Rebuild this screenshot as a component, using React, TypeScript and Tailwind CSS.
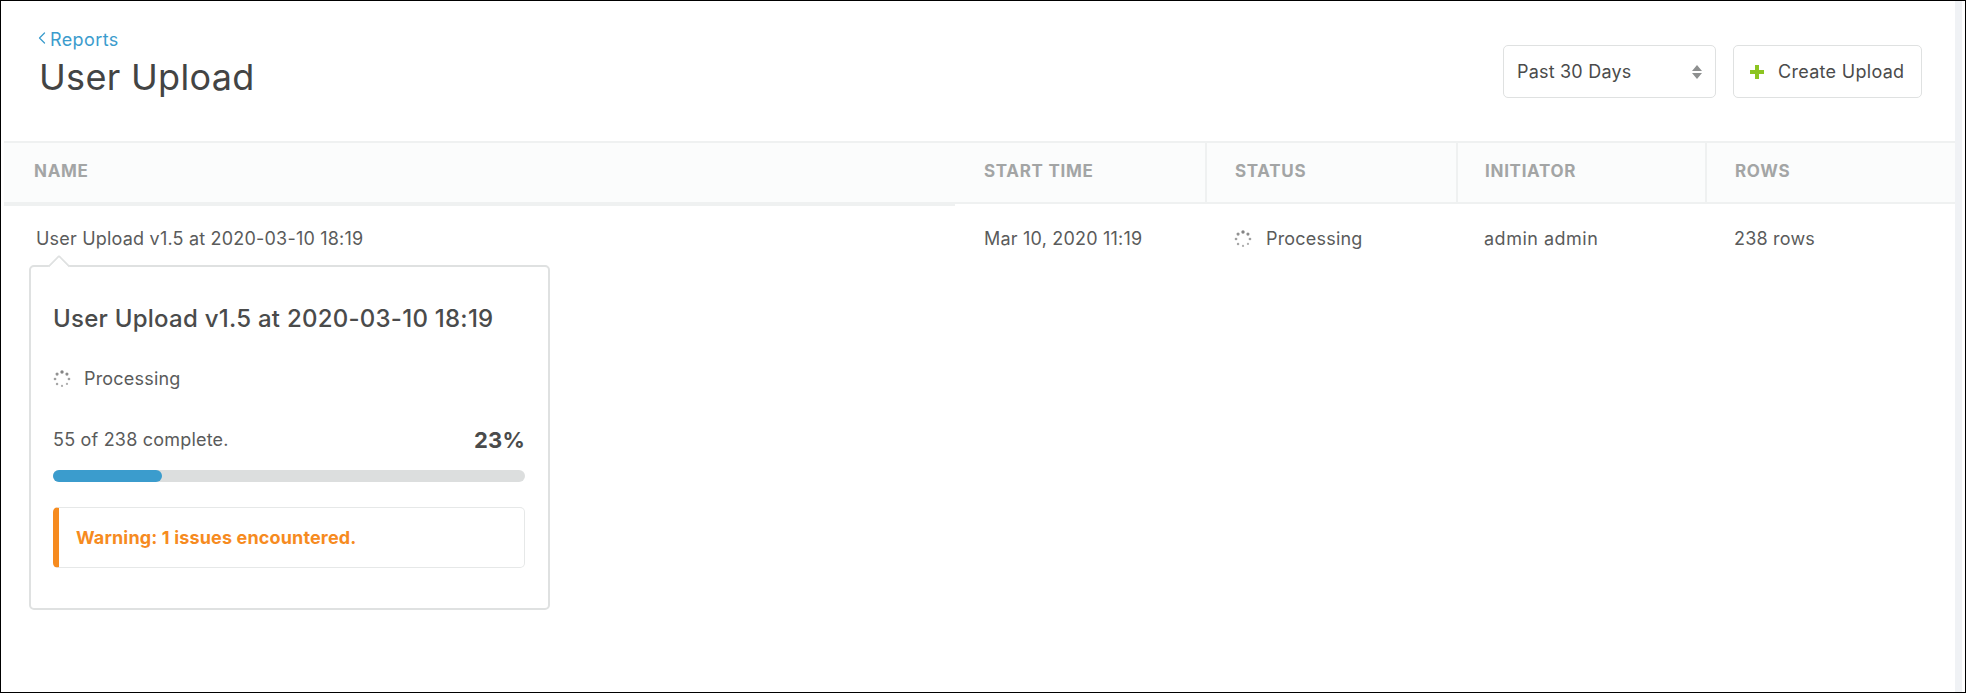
import { ChevronLeft } from "lucide-react";

const font = { fontFamily: "Inter, 'Noto Sans', sans-serif" };

// dotted spinner, each dot a bit fainter going round
function Spinner() {
  const dots = [
    [8, 1.8, 1.5, 0.9],
    [12.4, 3.6, 1.4, 0.85],
    [14.2, 8, 1.2, 0.7],
    [12.4, 12.4, 1, 0.6],
    [8, 14.2, 1, 0.6],
    [3.6, 12.4, 1.1, 0.65],
    [1.8, 8, 1.2, 0.7],
    [3.6, 3.6, 1.4, 0.8],
  ];
  return (
    <svg viewBox="0 0 16 16" className="h-[18px] w-[18px] shrink-0">
      {dots.map(([cx, cy, r, o], i) => (
        <circle key={i} cx={cx} cy={cy} r={r} fill="#777" opacity={o} />
      ))}
    </svg>
  );
}

function HeaderCell({ label, className }: { label: string; className: string }) {
  return (
    <div className={`flex items-center pb-[2px] text-[17px] font-bold tracking-[0.7px] text-[#a3a5a5] ${className}`}>
      {label}
    </div>
  );
}

export default function App() {
  return (
    <div className="relative h-[693px] w-[1966px] overflow-hidden border border-black bg-white text-[#4a4b4b]" style={font}>
      {/* scrollbar track */}
      <div className="absolute bottom-0 right-[3px] top-0 w-[7px] bg-[#f0f2f5]" />

      {/* Page title */}
      <div className="flex h-[140px] items-start justify-between pl-[38px] pr-[43px] pt-[28px]">
        <div>
          <a className="flex h-[22px] items-center text-[18px] leading-[22px] tracking-[0.4px] text-[#3b9ccd]">
            <ChevronLeft className="mb-[4px] -ml-[7px] -mr-[2px] h-5 w-5" strokeWidth={1.5} />
            <span>Reports</span>
          </a>
          <h1 className="mt-[5px] text-[36px] leading-[42px] font-normal tracking-[0.3px] text-[#434444]">User Upload</h1>
        </div>
        <div className="mt-[16px] flex gap-[17px]">
          <div className="flex h-[53px] w-[213px] items-center justify-between rounded-[5px] border border-[#dfe1e1] pl-[13px] pr-[13px] text-[18px] tracking-[0.2px]">
            Past 30 Days
            <svg viewBox="0 0 10 16" className="h-4 w-[10px]">
              <path d="M5 1l5 6H0zM5 15l5-6H0z" fill="#8e9090" />
            </svg>
          </div>
          <div className="flex h-[53px] w-[189px] items-center rounded-[5px] border border-[#dfe1e1] pl-[16px] text-[18px] tracking-[0.3px]">
            <svg viewBox="0 0 14 14" className="h-[14px] w-[14px]">
              <path d="M5 0h4v5h5v4H9v5H5V9H0V5h5z" fill="#8cc421" />
            </svg>
            <span className="ml-[14px]">Create Upload</span>
          </div>
        </div>
      </div>

      {/* Table */}
      <div className="ml-[3px] mr-[10px]">
        <div className="grid h-[63px] grid-cols-[950px_251px_251px_249px_1fr] border-y-[2px] border-y-[#eff1f1] bg-[#fbfcfc]">
          <HeaderCell label="NAME" className="pl-[30px]" />
          <HeaderCell label="START TIME" className="pl-[30px]" />
          <HeaderCell label="STATUS" className="border-l-2 border-[#eff1f1] pl-[28px]" />
          <HeaderCell label="INITIATOR" className="border-l-2 border-[#eff1f1] pl-[27px]" />
          <HeaderCell label="ROWS" className="border-l-2 border-[#eff1f1] pl-[28px]" />
        </div>
        <div className="h-[2px] w-[951px] bg-[#eff1f1]" />
        <div className="grid grid-cols-[950px_251px_251px_249px_1fr] pt-[21px] text-[18px] leading-[24px] tracking-[0.2px] text-[#5a5b5b]">
          <div className="pl-[32px]">User Upload v1.5 at 2020-03-10 18:19</div>
          <div className="pl-[30px]">Mar 10, 2020 11:19</div>
          <div className="flex items-center gap-[14px] pl-[29px]">
            <Spinner />
            Processing
          </div>
          <div className="pl-[28px] tracking-[0.5px]">admin admin</div>
          <div className="pl-[29px]">238 rows</div>
        </div>
      </div>

      {/* Popover under the name */}
      <div className="absolute left-[28px] top-[264px] h-[345px] w-[521px] rounded-[5px] border-2 border-[#dfe1e1] bg-white pl-[22px] pr-[23px] pt-[36px]">
        <div className="absolute -top-[9px] left-[20px] h-[16px] w-[16px] rotate-45 rounded-tl-[2px] border-l-2 border-t-2 border-[#dfe1e1] bg-white" />
        <h2 className="text-[24px] leading-[32px] font-medium tracking-[0.25px] text-[#4a4b4b]">User Upload v1.5 at 2020-03-10 18:19</h2>
        <div className="mt-[32px] flex items-center gap-[13px] text-[18px] leading-[24px] tracking-[0.2px] text-[#5a5b5b]">
          <Spinner />
          Processing
        </div>
        <div className="mt-[37px] flex items-end justify-between text-[18px] leading-[24px] tracking-[0.2px] text-[#5a5b5b]">
          <span>55 of 238 complete.</span>
          <span className="text-[22px] font-bold text-[#4a4b4b]">23%</span>
        </div>
        <div className="mt-[18px] h-[12px] rounded-full bg-[#dcdede]">
          <div className="h-full rounded-full bg-[#3b9ccd]" style={{ width: "23%" }} />
        </div>
        <div className="mt-[25px] flex h-[61px] items-center rounded-[5px] border border-[#e6e8e8] border-l-[6px] border-l-[#f68b1f] pl-[17px] text-[18px] font-bold tracking-[0.15px] text-[#f68b1f]">
          Warning: 1 issues encountered.
        </div>
      </div>
    </div>
  );
}
